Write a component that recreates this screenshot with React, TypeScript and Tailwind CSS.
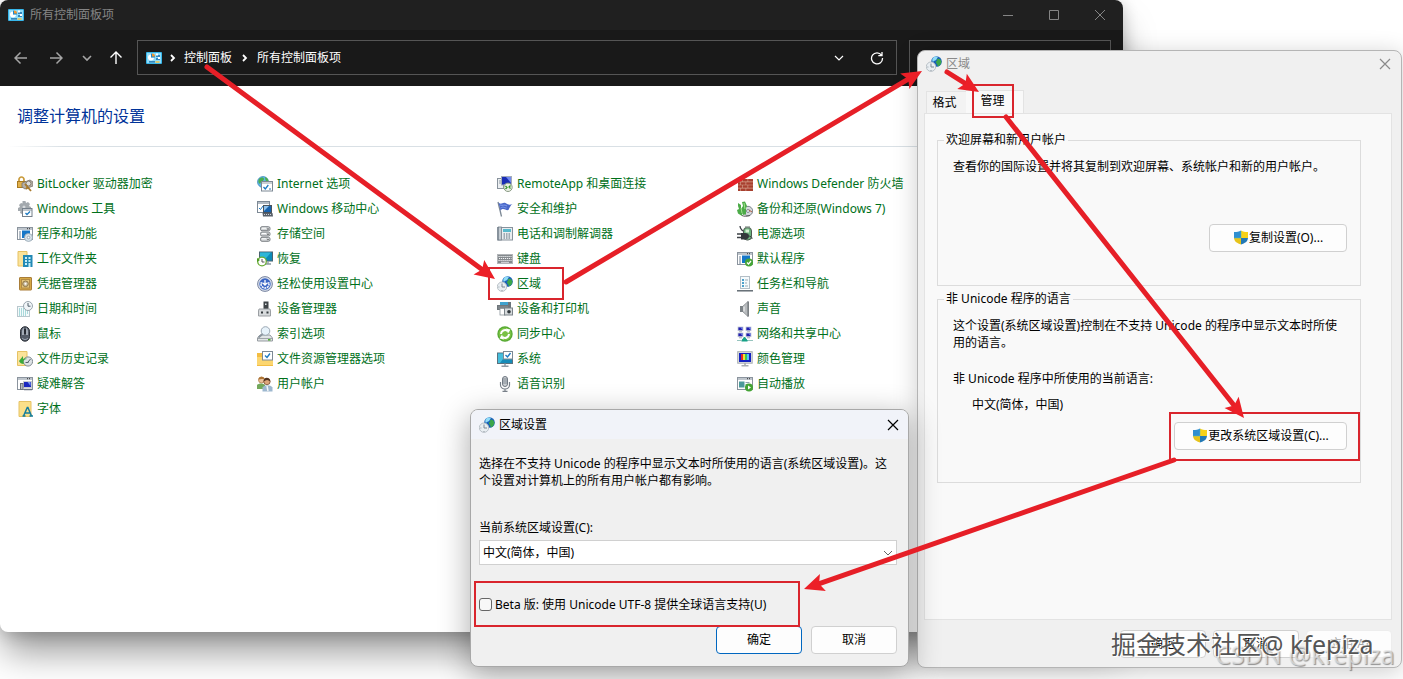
import type { ReactNode } from "react";

const uiFont = "font-['Noto_Sans','Noto_Sans_CJK_SC',sans-serif]";

function Svg({ children, size = 16 }: { children: ReactNode; size?: number }) {
  return (
    <svg width={size} height={size} viewBox="0 0 16 16" className="shrink-0" aria-hidden="true">
      {children}
    </svg>
  );
}

const frame = (
  <>
    <rect x="0.5" y="1.5" width="15" height="12" fill="#fff" stroke="#8b949e" />
    <path d="M1 3h14" stroke="#aab3bc" strokeWidth="1.5" />
    <path d="M10 2.700h1M12 2.700h1" stroke="#333" />
  </>
);

const globeClock = (
  <>
    <circle cx="10.500" cy="5.500" r="5.300" fill="#1b62b8" />
    <path d="M7 2c2-2 4-1.500 5-1-1 1-1 2-2 3s-2 0-3 2c-1-1-1-3 0-4z" fill="#8fdcf8" />
    <path d="M11 3c2-1 4 0 4.500 3-1 3-2 4-4 4.500 1-2-2-3-1.500-5 1-.5 1.500-1 1-2.500z" fill="#3ba64a" />
    <circle cx="5" cy="10.700" r="4.700" fill="#e9eef2" stroke="#b3bbc2" strokeWidth="0.900" />
    <path d="M5 7.500v3.500h3" stroke="#7b8792" fill="none" />
    <path d="M5 14v.8M1.500 11h.8" stroke="#7b8791" />
  </>
);

const panelIcon = (
  <>
    <rect x="0" y="2" width="16" height="12" rx="1" fill="#37b6ea" />
    <rect x="1" y="3" width="14" height="10" fill="#8fdcf9" />
    <path d="M5 4.500a3 3 0 1 0 3 3H5z" fill="#fff" />
    <path d="M5 3.500v4h4a4 4 0 0 0-1-3z" fill="#1f86cc" />
    <path d="M6 3.500v3h3a3 3 0 0 0-3-3z" fill="#f0962e" />
    <path d="M10 6h4M10 9h4M3 11.800h6" stroke="#1769a8" strokeWidth="1.300" />
    <rect x="10" y="3.500" width="2" height="2" fill="#fff" />
    <rect x="12" y="7" width="2" height="2" fill="#fff" />
    <path d="M9.500 12h4" stroke="#f4c542" strokeWidth="1.500" />
  </>
);

const icons: Record<string, ReactNode> = {
  bitlocker: (
    <>
      <path d="M2 6V3.500a2.500 2.500 0 0 1 5 0V6" fill="none" stroke="#c99b3c" strokeWidth="1.700" />
      <rect x="0.500" y="5.500" width="8" height="6" fill="#e2b04a" stroke="#a87a20" />
      <path d="M5 7l8-3 3 2v4l-8 3-3-2z" fill="#b5b0a8" stroke="#7c7469" strokeWidth="0.800" />
      <circle cx="11.500" cy="7.500" r="2.500" fill="#ddd" stroke="#867c6c" />
      <path d="M8 8l6 7M11 11l-2 2" stroke="#a97a2c" strokeWidth="1.800" />
    </>
  ),
  tools: (
    <>
      <path d="M5.500 0h3l.5 2 2-1 2 2-1 2 2 1v3H5v4l-2-1 .5-2L1 10V7l2-1-1-2 2-2 1.500.5z" fill="#a3a9ae" />
      <circle cx="7" cy="6" r="1.500" fill="#d5d9dc" />
      <rect x="5.500" y="7.500" width="9.500" height="8" fill="#fff" stroke="#75808b" />
      <path d="M6 9h9" stroke="#808b96" />
      <path d="M8.500 12l1.500 1.500 3-3" fill="none" stroke="#1d7ac2" strokeWidth="1.300" />
    </>
  ),
  programs: (
    <>
      {frame}
      <path d="M2 6h2M2 8h2M2 10h2M2 12h2" stroke="#6d7f90" />
      <rect x="5" y="4.500" width="8" height="7.500" fill="#1677c8" />
      <circle cx="11.500" cy="11.500" r="4" fill="#d5e1ea" stroke="#98a7b3" strokeWidth="0.800" />
      <circle cx="11.500" cy="11.500" r="1.300" fill="#fff" stroke="#8393a0" strokeWidth="0.700" />
    </>
  ),
  workfolder: (
    <>
      <path d="M1 0.500h9v14.500H1z" fill="#fbe39a" stroke="#e6c264" />
      <rect x="6" y="4" width="9.500" height="12" fill="#2389b5" />
      <path d="M8 6h2v2H8zM11.500 6h2v2h-2zM8 9h2v2H8zM11.500 9h2v2h-2zM8 12h2v2H8zM11.500 12h2v4h-2z" fill="#c5effa" />
    </>
  ),
  vault: (
    <>
      <rect x="2.500" y="1.500" width="12" height="12.500" rx="0.500" fill="#d5a846" stroke="#a97d38" />
      <rect x="4.500" y="3.500" width="8" height="8.500" fill="#e3c47a" stroke="#b38a45" />
      <circle cx="8.500" cy="7.800" r="2.800" fill="#cdbd9d" stroke="#8d7545" />
      <circle cx="8.500" cy="7.800" r="1" fill="#fff" />
    </>
  ),
  date: (
    <>
      <rect x="0.500" y="5.500" width="12" height="10" fill="#f4fafb" stroke="#b9c7cd" />
      <path d="M2 8h9M2 10h9M2 12h9M2 14h7" stroke="#5fb9bc" strokeDasharray="1 1" />
      <circle cx="11" cy="5" r="4.500" fill="#f1f5f8" stroke="#9aa5ae" />
      <path d="M11 2v3.200h2.500" fill="none" stroke="#4f5d69" />
    </>
  ),
  mouse: (
    <>
      <rect x="3.500" y="0.700" width="9" height="14.500" rx="4.500" fill="#555c68" stroke="#2d323a" />
      <path d="M5 5c0-2 2-3.500 2-3.500V9H5zM9 1.500s2 1.500 2 3.500v4H9z" fill="#a3abb6" />
      <rect x="7.300" y="3" width="1.400" height="5" fill="#15181d" />
      <path d="M5 12c2 2 4 2 6 0" stroke="#a4adba" fill="none" />
    </>
  ),
  history: (
    <>
      <path d="M0.500 0.500h9.500v14H.5z" fill="#fbe39a" stroke="#e6c264" />
      <circle cx="11" cy="10.500" r="4.600" fill="#dde2e5" stroke="#808a91" />
      <path d="M11 11l2.500-3M8.500 11.500h3" stroke="#56626c" />
      <path d="M2 10l4-5v3c3-1 4 0 4 0-4 0-4 3-3 5-3 0-4-1-5-3z" fill="#3aaa3c" />
    </>
  ),
  troubleshoot: (
    <>
      {frame}
      <rect x="6.500" y="5.500" width="8" height="6" fill="#1b28c0" stroke="#c7cbd2" />
      <path d="M10.500 6h3v4z" fill="#7896ee" />
      <rect x="3.500" y="7.500" width="2.500" height="6" fill="#b6bcc4" stroke="#6a7078" />
      <path d="M7 13.500h8" stroke="#697280" strokeWidth="1.500" />
    </>
  ),
  fonts: (
    <>
      <path d="M2 0.500h12v15H2z" fill="#fbe08a" stroke="#e6c264" />
      <path d="M6.500 15L10.300 6.500h.6l3.600 8.500M8 12h5M5.500 15h3M12.500 15H16" fill="none" stroke="#167e9c" strokeWidth="1.500" />
    </>
  ),
  internet: (
    <>
      <circle cx="6" cy="6" r="5.500" fill="#5eb6e8" stroke="#3a84b8" strokeWidth="0.700" />
      <path d="M2 3c2-2 5-2 5 0S4 5 3 8C1 7 1 5 2 3zM8 1c3 1 4 3 3 5-2 0-3-2-3-5z" fill="#4cae4f" />
      <rect x="4.500" y="5.500" width="11" height="9.500" fill="#fff" stroke="#7d8995" />
      <path d="M5 7h10" stroke="#93a0ac" />
      <path d="M6.500 11l1.800 2 3-4" fill="none" stroke="#1d7ac2" strokeWidth="1.300" />
      <path d="M12 13h2" stroke="#1d7ac2" />
    </>
  ),
  mobility: (
    <>
      <rect x="0.500" y="0.500" width="12" height="11" fill="#fff" stroke="#7d8995" />
      <path d="M1 2h11" stroke="#93a0ac" strokeWidth="1.400" />
      <path d="M2 7l1.500 1.500L6 5" fill="none" stroke="#1d7ac2" />
      <rect x="6.500" y="4.500" width="8" height="7" fill="#1762ad" stroke="#4a535d" />
      <path d="M7 5h5l-5 5z" fill="#8fc3ef" />
      <path d="M5.500 12h10l.5 3.500H6z" fill="#596069" />
      <path d="M7 13.500h8" stroke="#d1d5da" strokeDasharray="1 1" />
    </>
  ),
  storage: (
    <>
      {[0.7, 6, 11.3].map((y) => (
        <g key={y}>
          <rect x="3.500" y={y} width="9.500" height="4" rx="1.500" fill="#d1d4d6" stroke="#7c8185" />
          <path d={`M5 ${y + 1.5}h4`} stroke="#fff" />
          <circle cx="11" cy={y + 2.3} r="0.700" fill="#333" />
        </g>
      ))}
    </>
  ),
  recovery: (
    <>
      <rect x="2.500" y="1" width="13" height="9" fill="#0d8bb8" stroke="#4a6270" />
      <path d="M3 1.500h11L7 9.500H3z" fill="#2db6d8" />
      <path d="M11 10v2.500M8 13h6" stroke="#8f9ba4" strokeWidth="1.400" />
      <circle cx="5" cy="10.500" r="4.300" fill="#fff" stroke="#69ad35" strokeWidth="1.300" />
      <path d="M0 7v4l3-2z" fill="#4d9a21" />
      <path d="M5 8v3h2.500" fill="none" stroke="#555" />
    </>
  ),
  ease: (
    <>
      <circle cx="8" cy="8" r="7.400" fill="#d9dfeb" stroke="#7884a0" />
      <circle cx="8" cy="8" r="5.700" fill="#3c66c4" />
      <path d="M4 8a4 4 0 0 0 8 0" fill="none" stroke="#fff" strokeWidth="1.500" strokeDasharray="2 0.700" />
      <path d="M8 4v5M6 7l2 2 2-2M3.500 7h2M10.500 7h2" fill="none" stroke="#fff" strokeWidth="1.300" />
    </>
  ),
  device: (
    <>
      <rect x="6.500" y="0.500" width="5" height="8" fill="#3f4448" />
      <rect x="8" y="2.500" width="1.500" height="1.500" fill="#dfe3e5" />
      <path d="M2 8h11l.5 2v5H1.500v-5z" fill="#d7dadc" stroke="#9b9fa3" />
      <path d="M4 10.500h2v2H4zM9.500 10.500h2v2h-2z" fill="#33383c" />
    </>
  ),
  indexing: (
    <>
      <path d="M3 9h10l2.500 3v3H.5v-3z" fill="#e1e4e6" stroke="#959ba0" />
      <path d="M1 12.500h14" stroke="#a0a6aa" />
      <path d="M11 13.800h2.500" stroke="#4aac2a" strokeWidth="1.500" />
      <circle cx="8.500" cy="5" r="4.300" fill="#e7f2fa" stroke="#9aa7b3" />
      <path d="M5.500 8l-4 3.500" stroke="#8b959e" strokeWidth="1.800" />
    </>
  ),
  explorer: (
    <>
      <path d="M0 2h6l1 2h9v11H0z" fill="#f3bd43" />
      <path d="M0 6h16v8H0z" fill="#fcd670" />
      <rect x="5.500" y="0.500" width="10" height="8.500" fill="#fff" stroke="#7d8995" />
      <path d="M8 4.500L10 6.500 13 2.500" fill="none" stroke="#1d7ac2" strokeWidth="1.400" />
    </>
  ),
  users: (
    <>
      <circle cx="4.500" cy="4" r="3" fill="#eac19a" stroke="#a8743e" strokeWidth="0.700" />
      <path d="M1.500 3.500c0-3 5-4 6-.5-2 0-4-.5-6 .5z" fill="#ad7434" />
      <path d="M0 13V9c2-2 6-2 8 0v4z" fill="#73a85b" />
      <circle cx="10" cy="5.500" r="3.200" fill="#dca67b" stroke="#6f4528" strokeWidth="0.700" />
      <path d="M6.700 5.500c-.5-5 6.500-5 6.500 0-2-2-4-2-6.500 0z" fill="#513321" />
      <path d="M5.500 15.500v-4c2-3 8-3 10 0v4z" fill="#9db8cf" />
      <path d="M10 10l1 5" stroke="#f4f6f8" strokeWidth="1.500" />
    </>
  ),
  remote: (
    <>
      <rect x="0.500" y="2.500" width="6" height="10" fill="#eceff1" stroke="#88929c" />
      <path d="M2 5h3M2 7h3" stroke="#8d99a5" />
      <rect x="4.500" y="0.500" width="10" height="8.500" fill="#1a2db5" stroke="#a4acb9" />
      <path d="M9 1h5v6z" fill="#718af0" />
      <circle cx="11" cy="11.300" r="4.200" fill="#e9efe4" stroke="#8a9a85" />
      <path d="M8.500 10l1.500 1.500L8.500 13M13.500 9.500L12 11l1.500 1.500" fill="none" stroke="#2b8e22" strokeWidth="1.200" />
    </>
  ),
  flag: (
    <>
      <path d="M1 1l3.500 14.500" stroke="#7c8895" strokeWidth="1.300" />
      <path d="M1.500 1.500c3 3 4-1 7 .5 3 2 4 2 7 1-2 1-3 4-4 6-3 1-5-3-8 .5z" fill="#4a67c8" />
      <path d="M3 4c3 1 4-1 7 1M3.500 7c3-2 4 0 6 0" stroke="#7e9cec" fill="none" />
    </>
  ),
  phone: (
    <>
      <rect x="0.500" y="1.500" width="15" height="12.500" fill="#e9edf0" stroke="#87929c" />
      <rect x="1.500" y="1" width="3" height="13" fill="#c3cbd1" stroke="#75818c" strokeWidth="0.800" />
      <rect x="6" y="3" width="8" height="3" fill="#58b9cc" />
      <path d="M6.500 8h7M6.500 10h7M6.500 12h7" stroke="#586b7a" strokeDasharray="1.500 1" />
    </>
  ),
  keyboard: (
    <>
      <rect x="0.500" y="3.500" width="15" height="9" fill="#84898d" stroke="#b2b5b8" />
      <path d="M1.500 5.500h13M2 7.500h12.500M1.500 9.500h13" stroke="#f3f5f6" strokeDasharray="1.200 0.800" />
      <path d="M4 11.300h8" stroke="#e0e2e4" />
    </>
  ),
  region: globeClock,
  printer: (
    <>
      <rect x="3" y="1" width="8" height="4" fill="#3fa2cf" />
      <path d="M11 1h3v6h-3z" fill="#6b747b" />
      <rect x="0.500" y="4.500" width="11" height="4" fill="#7d8489" stroke="#6f767b" />
      <rect x="3" y="7.500" width="5" height="6.500" fill="#fff" stroke="#89939a" strokeWidth="0.800" />
      <rect x="7.500" y="7" width="8" height="7" fill="#d6dadc" stroke="#7b8389" />
      <circle cx="12" cy="10.800" r="1.800" fill="#30373c" />
    </>
  ),
  sync: (
    <>
      <circle cx="8" cy="8" r="7.700" fill="#54a832" />
      <circle cx="8" cy="8" r="6.500" fill="#79c143" />
      <path d="M4 8a4 4 0 0 1 6.500-3" fill="none" stroke="#fff" strokeWidth="2" />
      <path d="M9 2.500l4.500 1-2.500 4zM7 13.500l-4.500-1 2.500-4z" fill="#fff" />
      <path d="M12 8a4 4 0 0 1-6.500 3" fill="none" stroke="#fff" strokeWidth="2" />
    </>
  ),
  system: (
    <>
      <rect x="0.500" y="2" width="15" height="10.500" fill="#168cb9" stroke="#59717e" />
      <path d="M1 2.500h9l-7 9.500H1z" fill="#45bedc" />
      <rect x="6.500" y="0.500" width="9" height="7.500" fill="#fff" stroke="#7d8995" />
      <path d="M8.500 4l2 2 3-4" fill="none" stroke="#1d7ac2" strokeWidth="1.400" />
      <path d="M8 12.500V15M4.500 15.200h7" stroke="#8d9aa4" strokeWidth="1.500" />
    </>
  ),
  mic: (
    <>
      <rect x="5.500" y="0.500" width="5" height="10" rx="2.500" fill="#cdd1d5" stroke="#6f7780" />
      <path d="M5.500 3h5M5.500 5h5M5.500 7h5" stroke="#7f8790" />
      <path d="M3.500 6v3a4.500 4 0 0 0 9 0V6M8 13v2M5.500 15.300h5" fill="none" stroke="#7a828b" strokeWidth="1.200" />
    </>
  ),
  firewall: (
    <>
      <rect x="1" y="3" width="15" height="12" fill="#d9a591" />
      <path d="M1 3h4v2.600H1zM5.600 3h5v2.600h-5zM11.200 3H16v2.600h-4.800zM1 6.200h2v2.500H1zM3.600 6.200h5v2.500h-5zM9.200 6.200H16v2.500H9.200zM1 9.300h4v2.500H1zM5.600 9.300h5v2.500h-5zM11.200 9.300H16v2.500h-4.800zM1 12.400h2V15H1zM3.600 12.400h5V15h-5zM9.200 12.400H16V15H9.200z" fill="#a8402f" />
    </>
  ),
  backup: (
    <>
      <circle cx="11" cy="10" r="4.700" fill="#d5d9dc" stroke="#7b858c" />
      <circle cx="11" cy="10" r="1.500" fill="#f2f4f5" stroke="#858d94" />
      <path d="M1 2l3 2v4l2-3-1-4 3-.5 2 4.500-1 2v6l-3 1-1-2v3L1 12.500 0 9l2-1-1-3z" fill="#4cab48" />
      <path d="M4 7l1 5M7 2l1 6" stroke="#a0e18d" />
      <path d="M5 14.500c2 1 5 1 8 0" stroke="#555" fill="none" />
      <path d="M12 9l3 2" stroke="#b15a3f" />
    </>
  ),
  power: (
    <>
      <rect x="6.500" y="1.500" width="8" height="12.500" rx="3.500" fill="#6cb37e" stroke="#4c5a51" />
      <path d="M8.500 3.500h3.500v3H8.500z" fill="#d8f2d5" />
      <path d="M8 1.300h5" stroke="#7e8a82" strokeWidth="1.800" />
      <path d="M3 0c0 3 1 3 3 5M0 8h5M0 11.500h5" fill="none" stroke="#3c4146" strokeWidth="1.300" />
      <path d="M4 7h4c2.500 0 4 1 4 3s-1.500 3.500-4 3.500H4z" fill="#33383b" />
      <path d="M11 10c3 0 4 1 4 3" fill="none" stroke="#3a4044" />
    </>
  ),
  defaults: (
    <>
      {frame}
      <path d="M2 6h2M2 8h2M2 10h2M2 12h2" stroke="#6d7f90" />
      <rect x="5" y="4.500" width="8" height="7.500" fill="#1677c8" />
      <circle cx="12" cy="11.500" r="4" fill="#45a536" />
      <path d="M10 11.500l1.500 1.500 2.500-3" fill="none" stroke="#fff" strokeWidth="1.200" />
    </>
  ),
  taskbar: (
    <>
      <rect x="3.500" y="0.500" width="9" height="12" fill="#f5fafc" stroke="#b3bec6" />
      <path d="M5 4h2M5 7h2M5 10h2" stroke="#1784bb" strokeWidth="1.500" />
      <path d="M8 4h3M8 7h2M8 10h3" stroke="#9aabb7" />
      <path d="M0 14.800h16" stroke="#59626a" strokeWidth="1.400" />
    </>
  ),
  sound: (
    <>
      <path d="M3 5h3v6H3z" fill="#7c8286" />
      <path d="M6 5l5-4.500v15L6 11z" fill="#b7babd" stroke="#83878b" strokeWidth="0.700" />
      <path d="M10.500 0.500h1.500v15h-1.500z" fill="#7b8084" />
      <path d="M7 5.500v5" stroke="#e4e6e7" strokeWidth="1.500" />
    </>
  ),
  network: (
    <>
      {[[1, 1], [9, 1], [1, 7], [9, 7]].map(([x, y]) => (
        <g key={`${x}-${y}`}>
          <rect x={x} y={y} width="5" height="3.700" fill="#2320b0" stroke="#c4cad6" strokeWidth="0.800" />
          <path d={`M${x + 2.5} ${y + 0.4}h2.200v2.500z`} fill="#8195ef" />
          <path d={`M${x + 1} ${y + 4.8}h3`} stroke="#a7adb6" />
        </g>
      ))}
      <path d="M7.500 11l3 4h-6z" fill="#16a187" stroke="#16a187" />
      <path d="M0 14.500h5M11 14.500h5" stroke="#96c4be" />
    </>
  ),
  color: (
    <>
      <rect x="0.700" y="0.700" width="14.500" height="11.500" fill="#dfe1e3" stroke="#a8adb2" />
      <rect x="2" y="2" width="12" height="9" fill="#1422c1" />
      <path d="M4 3h3v6H4z" fill="#e32a2a" />
      <path d="M6 3h2v6H6z" fill="#f4e62e" />
      <path d="M8 3h2v6H8z" fill="#39c556" />
      <path d="M10 3h2v6h-2z" fill="#52c9f5" />
      <path d="M8 12v2.500M4.500 14.800h7" stroke="#a8adb2" strokeWidth="1.600" />
    </>
  ),
  autoplay: (
    <>
      {frame}
      <rect x="2" y="5.500" width="5.500" height="6" fill="#4c9a9b" />
      <path d="M8.500 6.500h4M8.500 8.500h4" stroke="#8fa2b0" />
      <circle cx="12" cy="11.500" r="4" fill="#45a536" />
      <path d="M11 9.500v4l3-2z" fill="#fff" />
    </>
  ),
};

const columns: [string, string][][] = [
  [
    ["bitlocker", "BitLocker 驱动器加密"],
    ["tools", "Windows 工具"],
    ["programs", "程序和功能"],
    ["workfolder", "工作文件夹"],
    ["vault", "凭据管理器"],
    ["date", "日期和时间"],
    ["mouse", "鼠标"],
    ["history", "文件历史记录"],
    ["troubleshoot", "疑难解答"],
    ["fonts", "字体"],
  ],
  [
    ["internet", "Internet 选项"],
    ["mobility", "Windows 移动中心"],
    ["storage", "存储空间"],
    ["recovery", "恢复"],
    ["ease", "轻松使用设置中心"],
    ["device", "设备管理器"],
    ["indexing", "索引选项"],
    ["explorer", "文件资源管理器选项"],
    ["users", "用户帐户"],
  ],
  [
    ["remote", "RemoteApp 和桌面连接"],
    ["flag", "安全和维护"],
    ["phone", "电话和调制解调器"],
    ["keyboard", "键盘"],
    ["region", "区域"],
    ["printer", "设备和打印机"],
    ["sync", "同步中心"],
    ["system", "系统"],
    ["mic", "语音识别"],
  ],
  [
    ["firewall", "Windows Defender 防火墙"],
    ["backup", "备份和还原(Windows 7)"],
    ["power", "电源选项"],
    ["defaults", "默认程序"],
    ["taskbar", "任务栏和导航"],
    ["sound", "声音"],
    ["network", "网络和共享中心"],
    ["color", "颜色管理"],
    ["autoplay", "自动播放"],
  ],
];

function Stroke({ d, size = 14, width = 1.2 }: { d: string; size?: number; width?: number }) {
  return (
    <svg width={size} height={size} viewBox="0 0 14 14" fill="none" stroke="currentColor" strokeWidth={width} className="shrink-0" aria-hidden="true">
      <path d={d} />
    </svg>
  );
}

const closePath = "M2 2l10 10M12 2L2 12";
const chevronDown = "M3 5l4 4 4-4";
const chevronRight = "M5 4l3 3-3 3";

function Shield() {
  return (
    <svg width="16" height="16" viewBox="0 0 16 16" className="shrink-0" aria-hidden="true">
      <path d="M8 0.500C6 1.500 4 2 1 2v6h7z" fill="#2f8fd0" />
      <path d="M8 0.500c2 1 4 1.500 7 1.500v6H8z" fill="#f7d117" />
      <path d="M1 8c.5 4 3 5 7 6.500V8z" fill="#e6c31a" />
      <path d="M15 8c-.5 4-3 5-7 6.500V8z" fill="#2379b5" />
      <path d="M8 1v7H1" fill="none" stroke="#57b8c2" strokeWidth="0.500" />
    </svg>
  );
}

function PushButton({ children, className }: { children: ReactNode; className: string }) {
  return (
    <button type="button" className={`flex h-7 items-center justify-center rounded border bg-[#fdfdfd] text-xs ${className}`}>
      {children}
    </button>
  );
}

function ControlPanel() {
  return (
    <main className="absolute left-0 top-0 flex h-[632px] w-[1123px] flex-col overflow-hidden rounded-lg bg-white shadow-[0_2px_16px_rgba(0,0,0,0.2),0_24px_36px_-4px_rgba(0,0,0,0.4)]">
      <header className="flex h-[30px] shrink-0 items-center justify-between bg-[#202020] pl-2 pr-4 text-[#858585]">
        <div className="flex items-center gap-[6px] text-xs leading-7">
          <Svg>{panelIcon}</Svg>
          <span>所有控制面板项</span>
        </div>
        <div className="flex gap-8">
          <button type="button" aria-label="最小化"><Stroke d="M2 7.500h10" width={1} /></button>
          <button type="button" aria-label="最大化"><Stroke d="M2.500 2.500h9v9h-9z" width={1} /></button>
          <button type="button" aria-label="关闭"><Stroke d={closePath} width={1} /></button>
        </div>
      </header>
      <nav className="flex h-14 shrink-0 items-start bg-[#191919] pl-1 pr-3 pt-[10px] text-white">
        <button type="button" aria-label="后退" className="flex h-[35px] w-[34px] items-center justify-center text-[#a5a5a5]"><Stroke d="M13 7H1M6.500 1.500L1 7l5.500 5.500" width={1.5} /></button>
        <button type="button" aria-label="前进" className="flex h-[35px] w-9 items-center justify-center text-[#a5a5a5]"><Stroke d="M1 7h12M7.500 1.500L13 7l-5.500 5.500" width={1.5} /></button>
        <button type="button" aria-label="最近" className="flex h-[35px] w-[25px] items-center justify-center text-[#a5a5a5]"><Stroke d={chevronDown} width={1.6} /></button>
        <button type="button" aria-label="向上" className="mr-1 flex h-[35px] w-[34px] items-center justify-center"><Stroke d="M7 13V1M1.500 6.500L7 1l5.500 5.500" width={1.4} /></button>
        <div className="flex h-[35px] flex-1 items-center justify-between border border-[#555] pl-2 pr-3">
          <div className="flex items-center text-xs">
            <Svg>{panelIcon}</Svg>
            <span className="flex w-[22px] justify-center"><Stroke d={chevronRight} width={1.8} /></span>
            <a href="#panel">控制面板</a>
            <span className="flex w-[25px] justify-center"><Stroke d={chevronRight} width={1.8} /></span>
            <a href="#all">所有控制面板项</a>
          </div>
          <div className="flex items-center gap-6">
            <button type="button" aria-label="展开"><Stroke d={chevronDown} /></button>
            <button type="button" aria-label="刷新"><Stroke d="M11.500 4.200A5.500 5.500 0 1 0 12.500 7M12 1v3.700H8.300" width={1.3} /></button>
          </div>
        </div>
        <input type="search" aria-label="搜索控制面板" className="ml-3 h-[35px] w-[202px] border border-[#555] bg-transparent" />
      </nav>
      <section className="pt-[18px]">
        <h1 className="pl-[17px] text-base leading-6 text-[#003399]">调整计算机的设置</h1>
        <div className="ml-2 mt-[18px] h-px bg-linear-to-r from-white via-[#d9e0e5] via-5% to-[#d9e0e5]" />
        <div className="grid grid-cols-[repeat(4,240px)] pl-[17px] pt-6">
          {columns.map((items, i) => (
            <ul key={i}>
              {items.map(([icon, label]) => (
                <li key={label}>
                  <a href={`#${icon}`} className="flex h-[25px] items-center gap-1 whitespace-nowrap text-xs text-[#00701a]">
                    <Svg>{icons[icon]}</Svg>
                    {label}
                  </a>
                </li>
              ))}
            </ul>
          ))}
        </div>
      </section>
    </main>
  );
}

function RegionWindow() {
  return (
    <section className="absolute left-[917px] top-[50px] flex h-[618px] w-[485px] flex-col rounded-lg border border-[#b5b5b5] bg-[#f0f0f0] pl-[6px] pr-[9px] text-xs shadow-[0_4px_24px_rgba(0,0,0,0.2)]">
      <header className="flex h-[26px] items-center justify-between pl-0.5 text-[#8a8a8a]">
        <h2 className="flex items-center gap-1">
          <Svg>{globeClock}</Svg>
          区域
        </h2>
        <button type="button" aria-label="关闭区域"><Stroke d={closePath} /></button>
      </header>
      <div role="tablist" className="mt-[13px] flex items-end pl-0.5">
        <button type="button" role="tab" aria-selected="false" className="h-[22px] w-10 border-l border-t border-[#e3e3e3] bg-[#f3f3f3] pr-1">格式</button>
        <button type="button" role="tab" aria-selected="true" className="h-[23px] w-[58px] border-r border-t border-[#e3e3e3] bg-[#f9f9f9] pb-0.5 pr-1">管理</button>
      </div>
      <div role="tabpanel" className="flex flex-1 flex-col gap-[5px] border border-[#e3e3e3] bg-[#f9f9f9] pl-3 pr-[30px] pt-[18px]">
        <fieldset className="h-[154px] border border-[#dcdcdc] pl-[6px]">
          <legend className="px-0.5 leading-4">欢迎屏幕和新用户帐户</legend>
          <p className="ml-[9px] mt-[10px] leading-[17px]">查看你的国际设置并将其复制到欢迎屏幕、系统帐户和新的用户帐户。</p>
          <PushButton className="ml-auto mr-[13px] mt-[49px] w-[138px] border-[#d0d0d0]"><Shield />复制设置(O)...</PushButton>
        </fieldset>
        <fieldset className="h-[192px] border border-[#dcdcdc] pl-[6px]">
          <legend className="px-0.5 leading-4">非 Unicode 程序的语言</legend>
          <p className="ml-[9px] mt-[10px] leading-[17px]">这个设置(系统区域设置)控制在不支持 Unicode 的程序中显示文本时所使<br />用的语言。</p>
          <p className="ml-[9px] mt-[19px] leading-[17px]">非 Unicode 程序中所使用的当前语言:</p>
          <p className="ml-7 mt-[9px] leading-[17px]">中文(简体，中国)</p>
          <PushButton className="ml-auto mr-[13px] mt-[9px] w-[173px] border-[#d0d0d0]"><Shield />更改系统区域设置(C)...</PushButton>
        </fieldset>
      </div>
      <footer className="mb-[9px] mt-[10px] flex justify-end gap-[7px]">
        <PushButton className="w-[86px] border-[#d0d0d0]">确定</PushButton>
        <PushButton className="w-[86px] border-[#d0d0d0]">取消</PushButton>
        <PushButton className="w-[86px] border-[#ededed] text-[#a5a5a5]">应用(A)</PushButton>
      </footer>
    </section>
  );
}

function LocaleDialog() {
  return (
    <section role="dialog" aria-label="区域设置" className="absolute left-[470px] top-[409px] h-[258px] w-[439px] overflow-hidden rounded-lg border border-[#a8a8a8] bg-[#f0f0f0] text-xs shadow-[0_8px_30px_2px_rgba(0,0,0,0.3)]">
      <header className="flex h-[29px] items-center justify-between bg-[#f1f3f9] px-2">
        <h2 className="flex items-center gap-1">
          <Svg>{globeClock}</Svg>
          区域设置
        </h2>
        <button type="button" aria-label="关闭区域设置"><Stroke d={closePath} /></button>
      </header>
      <form className="pl-2 pr-[11px] pt-4">
        <p className="leading-[17px]">选择在不支持 Unicode 的程序中显示文本时所使用的语言(系统区域设置)。这<br />个设置对计算机上的所有用户帐户都有影响。</p>
        <label htmlFor="locale" className="mt-[30px] block leading-[17px]">当前系统区域设置(C):</label>
        <div className="relative mt-1">
          <select id="locale" className="block h-[25px] w-full appearance-none border border-[#d0d0d0] bg-white pl-[3px] text-xs">
            <option>中文(简体，中国)</option>
          </select>
          <span className="pointer-events-none absolute inset-y-0 right-[2px] flex items-center text-[#666]"><Stroke d={chevronDown} width={1} /></span>
        </div>
        <label className="mt-[31px] flex h-[17px] items-center gap-[3px]">
          <input type="checkbox" className="size-[13px] appearance-none rounded-[3px] border border-[#666] bg-[#f8f8f8]" />
          <span>Beta 版: 使用 Unicode UTF-8 提供全球语言支持(U)</span>
        </label>
        <div className="mt-[13px] flex justify-end gap-[9px]">
          <PushButton className="w-[86px] border-[#0067c0]">确定</PushButton>
          <PushButton className="w-[86px] border-[#d0d0d0]">取消</PushButton>
        </div>
      </form>
    </section>
  );
}

function Arrow({ from, to }: { from: [number, number]; to: [number, number] }) {
  const length = Math.hypot(to[0] - from[0], to[1] - from[1]);
  const ux = (to[0] - from[0]) / length;
  const uy = (to[1] - from[1]) / length;
  const at = (back: number, side: number) => `${to[0] - ux * back - uy * side},${to[1] - uy * back + ux * side}`;
  return (
    <g fill="#ec1f27" stroke="none">
      <line x1={from[0]} y1={from[1]} x2={to[0] - ux * 14} y2={to[1] - uy * 14} stroke="#e61f27" strokeWidth="5" strokeLinecap="round" />
      <polygon points={`${at(0, 0)} ${at(20, 9)} ${at(16, 0)} ${at(20, -9)}`} />
    </g>
  );
}

function Annotations() {
  return (
    <svg className="pointer-events-none absolute inset-0 h-full w-full" aria-hidden="true">
      <g fill="none" stroke="#d9252d" strokeWidth="2">
        <rect x="489" y="268" width="74" height="31" />
        <rect x="973" y="85" width="40" height="32" />
        <rect x="1170" y="413" width="189" height="47" />
        <rect x="475" y="582" width="324" height="44" />
      </g>
      <Arrow from={[207, 67]} to={[495, 279]} />
      <Arrow from={[566, 282]} to={[922, 71]} />
      <Arrow from={[947, 72]} to={[979, 92]} />
      <Arrow from={[1006, 117]} to={[1244, 418]} />
      <Arrow from={[1174, 460]} to={[804, 589]} />
    </svg>
  );
}

export default function App() {
  return (
    <div className={`relative min-h-screen overflow-hidden bg-white text-black ${uiFont}`}>
      <ControlPanel />
      <RegionWindow />
      <LocaleDialog />
      <Annotations />
      <p className="absolute left-[1215px] top-[638px] whitespace-nowrap text-[25px] leading-8 text-[#e6e6e6]/70 [text-shadow:1px_1px_1px_rgba(0,0,0,0.4)]">CSDN @kfepiza</p>
      <p className="absolute left-[1111px] top-[628px] whitespace-nowrap text-[25px] leading-8 text-[#555] [text-shadow:1px_1px_0_#fff,-1px_-1px_0_rgba(255,255,255,0.6)]">掘金技术社区@ kfepiza</p>
    </div>
  );
}
